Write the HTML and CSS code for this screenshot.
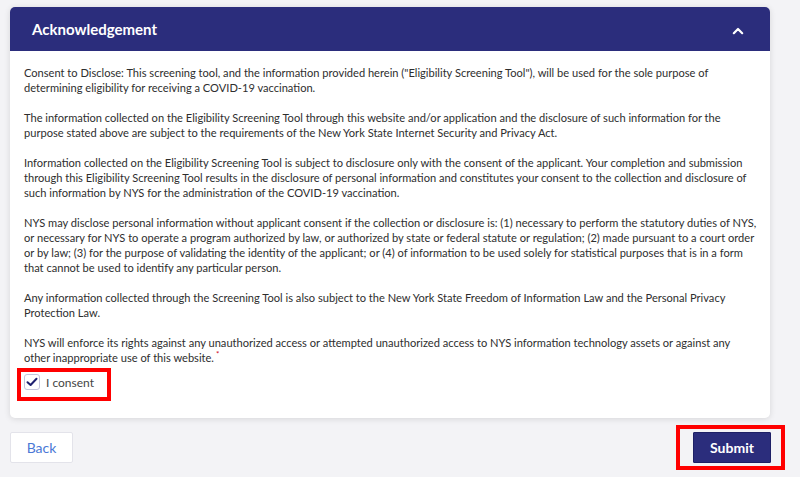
FILE: index.html
```html
<!DOCTYPE html>
<html lang="en">
<head>
<meta charset="utf-8">
<title>Acknowledgement</title>
<link rel="stylesheet" href="styles.css">
</head>
<body>
<div class="page">
  <section class="card">
    <header class="card-head">
      <h2 class="card-title">Acknowledgement</h2>
      <svg class="chevron" width="12" height="8" viewBox="0 0 12 8"><path d="M1.8 6.2 L6 2 L10.2 6.2" fill="none" stroke="#fff" stroke-width="2.2" stroke-linecap="round" stroke-linejoin="round"/></svg>
    </header>
    <div class="card-body">
      <p>Consent to Disclose: This screening tool, and the information provided herein ("Eligibility Screening Tool"), will be used for the sole purpose of determining eligibility for receiving a COVID-19 vaccination.</p>
      <p>The information collected on the Eligibility Screening Tool through this website and/or application and the disclosure of such information for the purpose stated above are subject to the requirements of the New York State Internet Security and Privacy Act.</p>
      <p>Information collected on the Eligibility Screening Tool is subject to disclosure only with the consent of the applicant. Your completion and submission through this Eligibility Screening Tool results in the disclosure of personal information and constitutes your consent to the collection and disclosure of such information by NYS for the administration of the COVID-19 vaccination.</p>
      <p>NYS may disclose personal information without applicant consent if the collection or disclosure is: (1) necessary to perform the statutory duties of NYS, or necessary for NYS to operate a program authorized by law, or authorized by state or federal statute or regulation; (2) made pursuant to a court order or by law; (3) for the purpose of validating the identity of the applicant; or (4) of information to be used solely for statistical purposes that is in a form that cannot be used to identify any particular person.</p>
      <p>Any information collected through the Screening Tool is also subject to the New York State Freedom of Information Law and the Personal Privacy Protection Law.</p>
      <p class="last">NYS will enforce its rights against any unauthorized access or attempted unauthorized access to NYS information technology assets or against any other inappropriate use of this website.<span class="req">*</span></p>
      <label class="consent">
        <span class="box"><svg width="12" height="10" viewBox="0 0 12 10"><path d="M1.5 5.2 L4.6 8 L10.5 1.8" fill="none" stroke="#1f2170" stroke-width="2" stroke-linecap="round" stroke-linejoin="round"/></svg></span>
        <span class="consent-text">I consent</span>
        <span class="mark mark-consent"></span>
      </label>
    </div>
  </section>
  <div class="actions">
    <button class="btn btn-back">Back</button>
    <div class="submit-wrap">
      <button class="btn btn-submit">Submit</button>
      <span class="mark mark-submit"></span>
    </div>
  </div>
</div>
</body>
</html>
```

FILE: styles.css
```css
* { box-sizing: border-box; }
html, body { margin: 0; padding: 0; }
body {
  background: #f3f3f6;
  font-family: Lato, "Open Sans", sans-serif;
  color: #2e2e2e;
  width: 800px;
  height: 477px;
  overflow: hidden;
}
.page {
  padding: 7px 30px 0 10px;
}
.card {
  width: 760px;
  background: #fff;
  border-radius: 5px;
  box-shadow: 0 1px 6px rgba(0,0,0,0.12);
}
.card-head {
  height: 44px;
  background: #2b2d7c;
  border-radius: 5px 5px 0 0;
  display: flex;
  align-items: center;
  justify-content: space-between;
  padding: 0 26px 0 22px;
}
.card-title {
  margin: 0;
  color: #fff;
  font-size: 15px;
  font-weight: 700;
}
.chevron { margin-top: 3px; }
.card-body {
  padding: 14px 12px 28px 14px;
  font-size: 11.1px;
  line-height: 15px;
}
.card-body p {
  margin: 0 0 15px;
}
.card-body p.last { margin-bottom: 0; }
.req {
  display: inline-block;
  color: #d0021b;
  font-size: 8px;
  line-height: 8px;
  vertical-align: 5px;
  margin-left: 2px;
}
.consent {
  position: relative;
  display: flex;
  align-items: center;
  gap: 6px;
  margin-top: 9px;
  width: max-content;
}
.box {
  width: 16px;
  height: 16px;
  border: 1px solid #c5c5dc;
  border-radius: 3px;
  display: flex;
  align-items: center;
  justify-content: center;
}
.consent-text {
  font-size: 12px;
  color: #444;
}
.mark {
  position: absolute;
  border: 4px solid #f00;
}
.mark-consent {
  left: -7px;
  top: -6px;
  width: 94px;
  height: 33px;
}
.actions {
  display: flex;
  justify-content: space-between;
  align-items: center;
  margin-top: 14px;
  width: 761px;
}
.btn {
  font-family: inherit;
  font-size: 14px;
  height: 31px;
  cursor: pointer;
}
.btn-back {
  width: 63px;
  background: #fff;
  border: 1px solid #e3e3ea;
  color: #4a78d6;
  border-radius: 2px;
}
.submit-wrap { position: relative; }
.btn-submit {
  width: 78px;
  display: block;
  background: #2b2d7c;
  border: 1px solid #1e2066;
  color: #fff;
  font-weight: 700;
  border-radius: 1px;
}
.mark-submit {
  left: -17px;
  top: -7px;
  width: 109px;
  height: 45px;
}
```
